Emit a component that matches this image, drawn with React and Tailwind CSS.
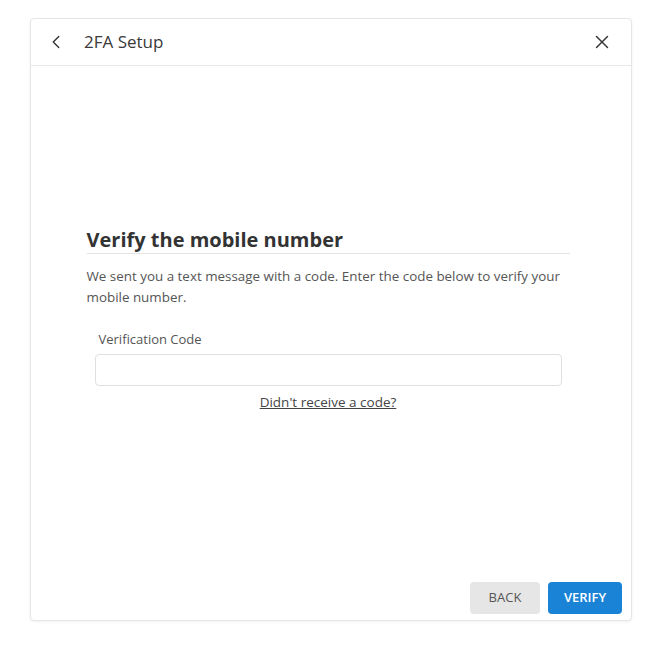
import { ChevronLeft, X } from 'lucide-react';

export default function App() {
  return (
    <div className="min-h-[649px] bg-white pt-[18px] pl-[30px] font-['Open_Sans',sans-serif]">
      <div className="flex h-[603px] w-[602px] flex-col rounded border border-[#e6e6e6] bg-white shadow-[0_1px_3px_rgba(0,0,0,0.06)]">
        <div className="flex h-[47px] items-center border-b border-[#e8e8e8] pl-[14px] pr-[18px]">
          <button className="mr-[17px] text-[#333]">
            <ChevronLeft size={22} strokeWidth={1.5} />
          </button>
          <h1 className="flex-1 text-[17px] text-[#3a3a3a]">2FA Setup</h1>
          <button className="text-[#333]">
            <X size={22} strokeWidth={1.5} />
          </button>
        </div>

        <div className="flex flex-1 items-center justify-center">
          <div className="ml-[-6px] w-[483px] pb-[8px]">
            <h2 className="border-b border-[#e3e3e3] text-[20px] leading-[26px] font-bold text-[#333]">
              Verify the mobile number
            </h2>
            <p className="mt-[12px] text-[13.4px] leading-[21px] text-[#555]">
              We sent you a text message with a code. Enter the code below to verify your mobile number.
            </p>
            <div className="mt-[22px] px-[8px]">
              <label className="ml-[4px] block text-[13px] text-[#555]">Verification Code</label>
              <input
                type="text"
                className="mt-[4px] h-[32px] w-full rounded border border-[#e0e0e0] px-2 text-[13px] outline-none"
              />
              <div className="mt-[3px] text-center">
                <a href="#" className="text-[13.5px] text-[#444] underline">
                  Didn't receive a code?
                </a>
              </div>
            </div>
          </div>
        </div>

        <div className="flex justify-end gap-[8px] pb-[6px] pr-[9px]">
          <button className="h-[32px] w-[70px] rounded bg-[#e6e6e6] text-[13px] text-[#555]">BACK</button>
          <button className="h-[32px] w-[74px] rounded bg-[#1a83d6] text-[13px] font-semibold text-white">
            VERIFY
          </button>
        </div>
      </div>
    </div>
  );
}
